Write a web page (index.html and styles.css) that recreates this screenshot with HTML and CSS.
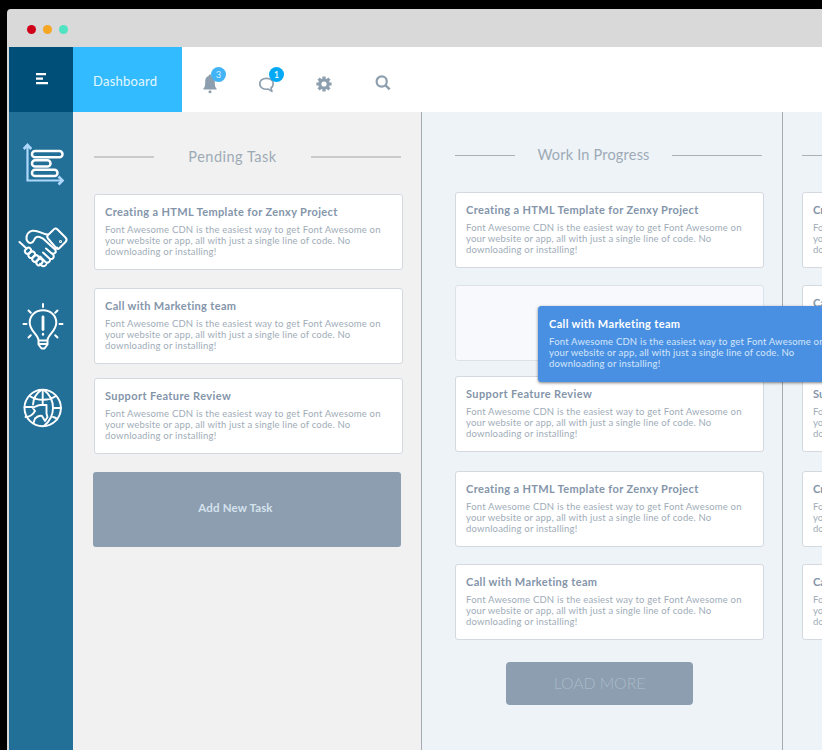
FILE: index.html
```html
<!DOCTYPE html>
<html lang="en">
<head>
<meta charset="utf-8">
<title>Dashboard</title>
<link rel="stylesheet" href="styles.css">
</head>
<body>
<div class="window">
  <div class="titlebar"><i class="dot red"></i><i class="dot amber"></i><i class="dot green"></i></div>
  <header class="topbar">
    <button class="menu" aria-label="Menu"><svg width="14" height="14" viewBox="0 0 14 14"><path d="M1 2.200h10M1 6.700h7M1 11.200h12" stroke="#fff" stroke-width="2.300"/></svg></button>
    <div class="tab">Dashboard</div>
    <nav class="tools">
      <span class="tool bell"><svg width="16" height="20" viewBox="0 0 16 20"><path fill="#8d9fae" d="M8 0.5c1 0 1.400.7 1.400 1.600 2.400.8 3.400 2.800 3.400 5.300 0 4 .3 5.400 1.800 7.200v1H1.400v-1c1.500-1.800 1.800-3.200 1.800-7.200 0-2.500 1-4.500 3.400-5.300C6.600 1.200 7 .5 8 .5z"/><circle cx="8" cy="17.700" r="1.500" fill="#8d9fae"/></svg><b class="badge soft">3</b></span>
      <span class="tool chat"><svg width="16" height="16" viewBox="0 0 16 16"><path fill="none" stroke="#8d9fae" stroke-width="1.700" stroke-linejoin="round" d="M7.500 1.300c4.300 0 6.700 2.500 6.700 5.500 0 1.900-.9 3.300-2.200 4.200l.9 3.400-3.600-2.300c-5.100.8-8.500-1.600-8.500-5.300 0-3 2.400-5.500 6.700-5.500z"/></svg><b class="badge">1</b></span>
      <span class="tool gear"><svg width="16" height="16" viewBox="0 0 16 16"><circle cx="8" cy="8" r="4.200" fill="none" stroke="#8d9fae" stroke-width="3.200"/><path stroke="#8d9fae" stroke-width="3.200" d="M8 .4v3M8 12.600v3M.4 8h3M12.600 8h3M2.600 2.600l2.100 2.100M11.300 11.300l2.100 2.100M13.400 2.600l-2.100 2.100M4.700 11.300l-2.100 2.100"/></svg></span>
      <span class="tool search"><svg width="16" height="16" viewBox="0 0 16 16"><circle cx="6.700" cy="6.500" r="5.100" fill="none" stroke="#8d9fae" stroke-width="2.200"/><path d="M10.300 10.200l4.400 4.200" stroke="#8d9fae" stroke-width="2.500"/></svg></span>
    </nav>
  </header>
  <div class="main">
    <aside class="sidebar">
      <svg class="nav-icon" width="48" height="48" viewBox="0 0 48 48" fill="none" stroke-width="2.500"><g stroke="#add8fb" stroke-width="2.200"><path d="M8.500 4v35.500h34"/><path d="M4.700 8l3.800-4 3.800 4M39.500 35.500l4 4-4 4" stroke-width="2.600"/></g><g stroke="#fff"><rect x="13" y="10" width="30.500" height="6.300" rx="3.100"/><rect x="13" y="19.300" width="18.500" height="6.300" rx="3.100"/><rect x="13" y="28.700" width="25.500" height="6.300" rx="3.100"/></g></svg>
      <svg class="nav-icon" width="48" height="48" viewBox="0 0 48 48" fill="none" stroke="#fff" stroke-width="2" stroke-linecap="round" stroke-linejoin="round"><g transform="translate(1 3)"><path d="M33 5.200c1.500-2 3-2.200 4.500-.7l8 8c1.500 1.500 1.500 3 0 4.500l-6 6c-1.200 1.200-2.200 1.200-3.500 0l-8-9.500c-1.200-1.500-1-2.500 0-3.500z"/><path d="M27.500 9.500C22 9 18.500 5 12.500 5.700 8.500 6.200 6 10 6.500 14c.5 3 2.500 4.200 4.800 3.800 3-.6 2.500-3.600 4.500-5.300 2.500-2 4.200-.2 7.700 1.500L35 24.500c2 2.500-.5 5.500-3.500 3.500"/><path d="M-.5 17l7 6.500M26 23.500l7.500 6.500c1 3-1.500 5-4 3.500M23 27.500l7 6.500c.5 3-2 4.500-4.500 3L20 31.500M27 38c-1.500 4-4 4.500-7 1M35.500 24l1.500-1.500"/><rect x="4.700" y="23.200" width="6.500" height="5" rx="2.500" transform="rotate(-45 8 25.700)"/><rect x="8.200" y="27.200" width="7" height="5" rx="2.500" transform="rotate(-45 11.700 29.700)"/><rect x="12" y="31" width="7" height="5" rx="2.500" transform="rotate(-45 15.500 33.500)"/><rect x="16" y="34.500" width="7" height="5" rx="2.500" transform="rotate(-45 19.500 37)"/><circle cx="40.500" cy="16.500" r=".5"/></g></svg>
      <svg class="nav-icon" width="48" height="48" viewBox="0 0 48 48" fill="none" stroke="#fff" stroke-width="2" stroke-linecap="round" stroke-linejoin="round"><path d="M19.500 37.500c0-6-8.800-9-8.800-18C10.700 12.300 16.500 7.200 24 7.200s13.300 5.100 13.300 12.300c0 9-8.800 12-8.800 18zM19.500 37.500v4l3 4h3l3-4v-4M19.500 41h9"/><path d="M24 1v3M4.500 21h3M40.500 21h3M9.500 7.500l2.300 2.300M38.500 7.500l-2.300 2.300M9.500 34.500l2.300-2.300M38.500 34.500l-2.300-2.300"/><path d="M24 14v12.500" stroke-width="2.800"/><path d="M24 31v.5" stroke-width="2.400"/></svg>
      <svg class="nav-icon" width="48" height="48" viewBox="0 0 48 48" fill="none" stroke="#fff" stroke-width="1.900" stroke-linecap="round" stroke-linejoin="round"><circle cx="23.700" cy="24" r="18.200"/><path d="M10.500 12c8 5 19 5 26.500 0M23.700 6v15M22.500 6c-5 3-8 8-8.500 14.500M25 6c6.500 5 9 11 9 18s-3 13-9 18M5.500 23h8M34 24h8M34 33c2 .3 3.500 1.200 4 2.500"/><path d="M6.500 33c4.500 0 7.500-2.500 9.500-6l-2.500-3.500c3-.5 5-2.500 8.500-2.500h5.500v8.500l1 3.500-2.500 4-3-5c-2.500-1-5 .5-7 2.500L14.500 39M25 6h-2.500"/></svg>
    </aside>
    <section class="column pending">
      <div class="heading"><hr class="short"><h2>Pending Task</h2><hr class="long"></div>
      <div class="stack">
        <article class="card"><h3 class="t-create">Creating a HTML Template for Zenxy Project</h3><p><span class="l1">Font Awesome CDN is the easiest way to get Font Awesome on</span> <span class="l2">your website or app, all with just a single line of code. No</span> <span class="l3">downloading or installing!</span></p></article>
        <article class="card"><h3 class="t-call">Call with Marketing team</h3><p><span class="l1">Font Awesome CDN is the easiest way to get Font Awesome on</span> <span class="l2">your website or app, all with just a single line of code. No</span> <span class="l3">downloading or installing!</span></p></article>
        <article class="card"><h3 class="t-support">Support Feature Review</h3><p><span class="l1">Font Awesome CDN is the easiest way to get Font Awesome on</span> <span class="l2">your website or app, all with just a single line of code. No</span> <span class="l3">downloading or installing!</span></p></article>
        <button class="add">Add New Task</button>
      </div>
    </section>
    <section class="column progress">
      <div class="heading"><hr class="short"><h2>Work In Progress</h2><hr class="long"></div>
      <div class="stack">
        <article class="card"><h3 class="t-create">Creating a HTML Template for Zenxy Project</h3><p><span class="l1">Font Awesome CDN is the easiest way to get Font Awesome on</span> <span class="l2">your website or app, all with just a single line of code. No</span> <span class="l3">downloading or installing!</span></p></article>
        <div class="slot">
          <article class="card dragged"><h3 class="t-call">Call with Marketing team</h3><p><span class="l1">Font Awesome CDN is the easiest way to get Font Awesome on</span> <span class="l2">your website or app, all with just a single line of code. No</span> <span class="l3">downloading or installing!</span></p></article>
        </div>
        <article class="card"><h3 class="t-support">Support Feature Review</h3><p><span class="l1">Font Awesome CDN is the easiest way to get Font Awesome on</span> <span class="l2">your website or app, all with just a single line of code. No</span> <span class="l3">downloading or installing!</span></p></article>
        <article class="card"><h3 class="t-create">Creating a HTML Template for Zenxy Project</h3><p><span class="l1">Font Awesome CDN is the easiest way to get Font Awesome on</span> <span class="l2">your website or app, all with just a single line of code. No</span> <span class="l3">downloading or installing!</span></p></article>
        <article class="card"><h3 class="t-call">Call with Marketing team</h3><p><span class="l1">Font Awesome CDN is the easiest way to get Font Awesome on</span> <span class="l2">your website or app, all with just a single line of code. No</span> <span class="l3">downloading or installing!</span></p></article>
        <button class="more">LOAD MORE</button>
      </div>
    </section>
    <section class="column next">
      <div class="heading"><hr class="short"></div>
      <div class="stack">
        <article class="card"><h3>Cr</h3><p><span>Fo</span><span>yo</span><span>do</span></p></article>
        <article class="card"><h3>Ca</h3></article>
        <article class="card"><h3>Su</h3><p><span>Fo</span><span>yo</span><span>do</span></p></article>
        <article class="card"><h3>Cr</h3><p><span>Fo</span><span>yo</span><span>do</span></p></article>
        <article class="card"><h3>Ca</h3><p><span>Fo</span><span>yo</span><span>do</span></p></article>
      </div>
    </section>
  </div>
</div>
</body>
</html>
```
FILE: styles.css
```css
* { box-sizing: border-box; }
body { margin: 0; height: 750px; overflow: hidden; background: #000; padding: 9px 0 0 7px; font-family: Lato, "Open Sans", sans-serif; }
button { border: 0; padding: 0; font-family: inherit; }
h2, h3, p, hr { margin: 0; }
.window { width: 815px; height: 741px; overflow: hidden; border-radius: 4px 0 0 0; background: #d9d9d9; padding-left: 2px; }
.titlebar { height: 38px; display: flex; gap: 7px; padding: 16px 0 0 18px; }
.dot { width: 9px; height: 9px; border-radius: 50%; }
.red { background: #d0021b; }
.amber { background: #f5a623; }
.green { background: #50e3c2; }
.topbar { display: flex; height: 65px; background: #fff; }
.menu { width: 64px; background: #004f78; display: flex; align-items: center; justify-content: center; padding: 0 0 1px 2px; }
.tab { width: 109px; background: #33bbff; color: #e4f7ff; font-size: 13px; line-height: 68px; padding-left: 20px; letter-spacing: .25px; }
.tools { display: flex; }
.tool { position: relative; display: block; height: 20px; }
.tool svg { display: block; }
.bell { margin: 27px 0 0 20px; width: 16px; }
.chat { margin: 30px 0 0 41px; width: 16px; }
.gear { margin: 29px 0 0 41px; width: 16px; }
.search { margin: 28px 0 0 43px; width: 16px; }
.badge { position: absolute; left: 9px; top: -7px; width: 15px; height: 15px; border-radius: 50%; background: #03a9f4; color: #fff; font-size: 9.500px; font-weight: 400; line-height: 15px; text-align: center; }
.chat .badge { top: -10px; left: 10px; }
.soft { background: #42b4f5; color: #d2efff; }
.main { display: flex; height: 638px; }
.sidebar { width: 64px; flex: none; background: #226f97; padding: 29px 0 0 10px; display: flex; flex-direction: column; gap: 33px; }
.nav-icon { flex: none; overflow: visible; }
.column { flex: none; }
.pending { width: 348px; background: #f1f1f1; padding: 35px 0 0 21px; }
.progress { width: 362px; background: #eef3f8; border-left: 1px solid #a5aab2; border-right: 1px solid #a5aab2; padding: 33px 0 0 33px; }
.next { width: 39px; background: #eef3f8; padding: 33px 0 0 19px; }
.heading { display: flex; align-items: center; width: 307px; height: 20px; }
.heading h2 { flex: 1; text-align: center; font-weight: 400; font-size: 14.500px; line-height: 20px; color: #9daab5; letter-spacing: .2px; white-space: nowrap; }
.pending h2 { letter-spacing: .5px; }
.heading hr { border: 0; height: 1px; background: #a9b0b7; }
.pending hr { height: 2px; background: #c9cbcd; }
.short { width: 60px; flex: none; }
.long { width: 90px; flex: none; }
.stack { display: grid; width: 309px; padding-top: 27px; }
.pending .stack { grid-template-rows: 94px 90px 94px 75px; }
.progress .stack, .next .stack { grid-template-rows: 93px 91px 95px 93px 98px 44px; }
.card, .slot { border: 1px solid #d3d9de; border-radius: 3px; height: 76px; }
.card { background: #fff; padding: 8px 10px 0; color: #a0acb8; }
.card h3 { font-size: 11px; line-height: 17px; font-weight: 700; color: #8495aa; white-space: nowrap; }
.card p { font-size: 9.500px; line-height: 11px; padding-top: 4px; font-weight: 400; }
.card p span { display: block; white-space: nowrap; }
.t-create { letter-spacing: .37px; }
.t-call { letter-spacing: .35px; }
.t-support { letter-spacing: .4px; }
.l1 { letter-spacing: .19px; }
.l2 { letter-spacing: .16px; }
.l3 { letter-spacing: .19px; }
.slot { position: relative; background: #f8f9fd; border-color: #dce2ea; }
.dragged { position: absolute; z-index: 2; left: 82px; top: 20px; width: 309px; background: #4a90e2; border-color: #4a90e2; color: #d4e6fb; box-shadow: 0 1px 3px rgba(0,0,0,.5); }
.dragged h3 { color: #fff; }
.add { width: 308px; height: 75px; margin-left: -1px; border-radius: 3px; background: #8c9eaf; color: #d5e2ee; font-weight: 700; font-size: 11.500px; padding: 0 23px 4px 0; letter-spacing: .15px; }
.more { width: 187px; height: 43px; margin-left: 51px; padding-bottom: 3px; border-radius: 4px; background: #8c9eaf; color: #a9bac9; font-size: 16px; font-weight: 300; letter-spacing: -.15px; }
```
